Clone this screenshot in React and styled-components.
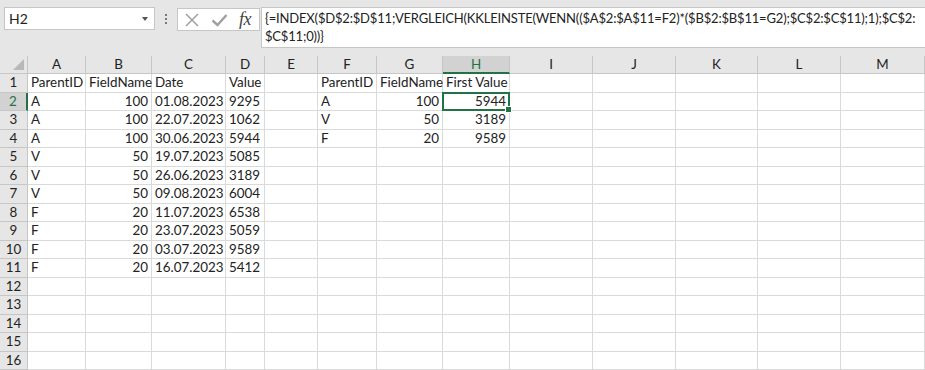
import React from "react";
import styled, { createGlobalStyle, css } from "styled-components";

const Global = createGlobalStyle`
  html, body { margin: 0; padding: 0; background: #ffffff; }
  body { font-family: Lato, "Open Sans", sans-serif; overflow: hidden; }
  * { box-sizing: border-box; }
`;

const GREEN = "#217346";

const Page = styled.div`
  width: 925px;
  height: 370px;
  display: flex;
  flex-direction: column;
  overflow: hidden;
`;

const Toolbar = styled.div`
  height: 56px;
  background: #e6e6e6;
  display: flex;
  align-items: flex-start;
  padding: 7px 0 0 4px;
  flex-shrink: 0;
`;

const NameBox = styled.div`
  flex-shrink: 0;
  width: 151px;
  height: 23px;
  background: #fff;
  border: 1px solid #c6c6c6;
  display: flex;
  align-items: center;
  justify-content: space-between;
  padding: 0 6px 0 4px;
  font-size: 14px;
  color: #222;
`;

const DropArrow = styled.span`
  width: 0;
  height: 0;
  border-left: 3px solid transparent;
  border-right: 3px solid transparent;
  border-top: 4px solid #555;
  margin-top: 1px;
`;

const Dots = styled.div`
  flex-shrink: 0;
  width: 22px;
  height: 23px;
  display: flex;
  flex-direction: column;
  align-items: center;
  justify-content: center;
  gap: 2px;
  & > span {
    width: 2px;
    height: 2px;
    background: #777;
  }
`;

const IconBox = styled.div`
  flex-shrink: 0;
  width: 83px;
  height: 23px;
  margin-top: 1px;
  background: #fff;
  border: 1px solid #c6c6c6;
  display: flex;
  align-items: center;
  padding-left: 7px;
  gap: 12px;
`;

const Fx = styled.span`
  font-family: "Liberation Serif", "DejaVu Serif", serif;
  font-style: italic;
  font-size: 18px;
  color: #444;
  margin-left: -1px;
  letter-spacing: -0.5px;
  line-height: 1;
  padding-bottom: 2px;
`;

const FormulaBox = styled.div`
  flex: 1;
  min-width: 0;
  height: 41px;
  margin-left: 1px;
  background: #fff;
  border: 1px solid #c6c6c6;
  border-right: none;
  padding: 1px 0 0 3px;
  font-size: 13px;
  letter-spacing: -0.18px;
  line-height: 18px;
  color: #222;
  white-space: nowrap;
  overflow: hidden;
`;

const Grid = styled.div`
  display: grid;
  grid-template-columns: 28px 58px 66px 74px 39px 53px 59px 66px 67px 83px 83px 82px 83px 84px;
  grid-template-rows: 18px;
  grid-auto-rows: 18.5px;
  font-size: 13.4px;
  color: #222;
`;

const Corner = styled.div`
  background: #e6e6e6;
  border-right: 1px solid #c6c6c6;
  border-bottom: 1px solid #c6c6c6;
  position: relative;
  &::after {
    content: "";
    position: absolute;
    right: 3px;
    bottom: 3px;
    width: 0;
    height: 0;
    border-left: 11px solid transparent;
    border-bottom: 11px solid #b8b8b8;
  }
`;

const ColHead = styled.div`
  background: ${(p) => (p.$sel ? "#d2d2d2" : "#e6e6e6")};
  border-right: 1px solid #c6c6c6;
  border-bottom: ${(p) => (p.$sel ? `2px solid ${GREEN}` : "1px solid #c6c6c6")};
  color: ${(p) => (p.$sel ? GREEN : "#222")};
  display: flex;
  align-items: center;
  justify-content: center;
  line-height: 1;
  padding-top: 1px;
`;

const RowHead = styled.div`
  background: ${(p) => (p.$sel ? "#d2d2d2" : "#e6e6e6")};
  border-bottom: 1px solid #c6c6c6;
  border-right: ${(p) => (p.$sel ? `2px solid ${GREEN}` : "1px solid #c6c6c6")};
  color: ${(p) => (p.$sel ? GREEN : "#222")};
  display: flex;
  align-items: center;
  justify-content: center;
  line-height: 1;
`;

const Cell = styled.div`
  border-right: 1px solid #dadada;
  border-bottom: 1px solid #dadada;
  display: flex;
  align-items: center;
  justify-content: ${(p) => (p.$right ? "flex-end" : "flex-start")};
  padding: 0 3px;
  white-space: nowrap;
  overflow: visible;
  line-height: 1;
  position: relative;
  ${(p) =>
    p.$sel &&
    css`
      &::after {
        content: "";
        position: absolute;
        left: -1px;
        top: -1px;
        right: -1px;
        bottom: -1px;
        border: 2px solid ${GREEN};
        pointer-events: none;
      }
      &::before {
        content: "";
        position: absolute;
        right: -3px;
        bottom: -3px;
        width: 5px;
        height: 5px;
        background: ${GREEN};
        border: 1px solid #fff;
        z-index: 2;
      }
    `}
`;

const cols = ["A", "B", "C", "D", "E", "F", "G", "H", "I", "J", "K", "L", "M"];

const dataLeft = [
  ["ParentID", "FieldName", "Date", "Value"],
  ["A", 100, "01.08.2023", 9295],
  ["A", 100, "22.07.2023", 1062],
  ["A", 100, "30.06.2023", 5944],
  ["V", 50, "19.07.2023", 5085],
  ["V", 50, "26.06.2023", 3189],
  ["V", 50, "09.08.2023", 6004],
  ["F", 20, "11.07.2023", 6538],
  ["F", 20, "23.07.2023", 5059],
  ["F", 20, "03.07.2023", 9589],
  ["F", 20, "16.07.2023", 5412],
];

const dataRight = [
  ["ParentID", "FieldName", "First Value"],
  ["A", 100, 5944],
  ["V", 50, 3189],
  ["F", 20, 9589],
];

function cellFor(r, c) {
  let v = "";
  let right = false;
  if (c <= 3 && dataLeft[r]) {
    v = dataLeft[r][c];
    right = r > 0 && c === 1;
  } else if (c >= 5 && c <= 7 && dataRight[r]) {
    v = dataRight[r][c - 5];
    right = r > 0 && c >= 6;
  }
  return { v, right };
}

const XIcon = () => (
  <svg width="14" height="14" viewBox="0 0 14 14">
    <path d="M1 1 L13 13 M13 1 L1 13" stroke="#a0a0a0" strokeWidth="1.5" fill="none" />
  </svg>
);

const CheckIcon = () => (
  <svg width="17" height="14" viewBox="0 0 17 14">
    <path d="M1.5 7.5 L6.5 12 L15.5 2" stroke="#a0a0a0" strokeWidth="2.4" fill="none" />
  </svg>
);

export default function App() {
  const rows = [];
  for (let r = 0; r < 16; r++) {
    rows.push(
      <RowHead key={`rh${r}`} $sel={r === 1}>
        {r + 1}
      </RowHead>
    );
    for (let c = 0; c < 13; c++) {
      const { v, right } = cellFor(r, c);
      rows.push(
        <Cell key={`c${r}-${c}`} $right={right} $sel={r === 1 && c === 7}>
          {v}
        </Cell>
      );
    }
  }
  return (
    <Page>
      <Global />
      <Toolbar>
        <NameBox>
          <span>H2</span>
          <DropArrow />
        </NameBox>
        <Dots>
          <span />
          <span />
          <span />
        </Dots>
        <IconBox>
          <XIcon />
          <CheckIcon />
          <Fx>fx</Fx>
        </IconBox>
        <FormulaBox>
          <div>{"{=INDEX($D$2:$D$11;VERGLEICH(KKLEINSTE(WENN(($A$2:$A$11=F2)*($B$2:$B$11=G2);$C$2:$C$11);1);$C$2:"}</div>
          <div>{"$C$11;0))}"}</div>
        </FormulaBox>
      </Toolbar>
      <Grid>
        <Corner />
        {cols.map((c) => (
          <ColHead key={c} $sel={c === "H"}>
            {c}
          </ColHead>
        ))}
        {rows}
      </Grid>
    </Page>
  );
}
